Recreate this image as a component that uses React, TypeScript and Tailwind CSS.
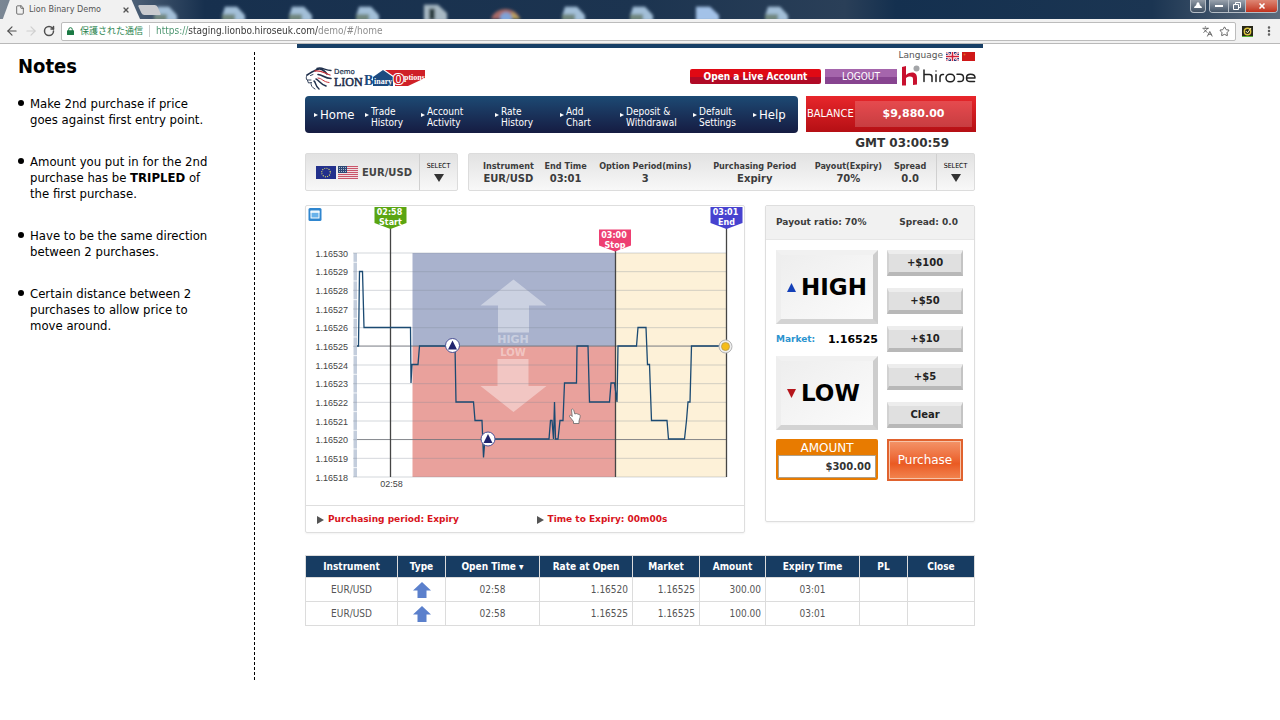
import { useState } from 'react';
import type { ReactNode } from 'react';
import { ArrowLeft, ArrowRight, EllipsisVertical, File, Languages, RotateCw, Star, X } from 'lucide-react';

const condensed = "font-['DejaVu_Sans_Condensed','DejaVu_Sans',sans-serif]";
const wide = "font-['DejaVu_Sans',sans-serif]";

const navItems = [
  ['Home'],
  ['Trade', 'History'],
  ['Account', 'Activity'],
  ['Rate', 'History'],
  ['Add', 'Chart'],
  ['Deposit &', 'Withdrawal'],
  ['Default', 'Settings'],
  ['Help'],
];

const details = [
  ['Instrument', 'EUR/USD'],
  ['End Time', '03:01'],
  ['Option Period(mins)', '3'],
  ['Purchasing Period', 'Expiry'],
  ['Payout(Expiry)', '70%'],
  ['Spread', '0.0'],
];

const positions = [
  { pair: 'EUR/USD', opened: '02:58', rate: '1.16520', market: '1.16525', amount: '300.00', expiry: '03:01' },
  { pair: 'EUR/USD', opened: '02:58', rate: '1.16525', market: '1.16525', amount: '100.00', expiry: '03:01' },
];

const columns = [
  { label: 'Instrument', width: 'w-[92px]' },
  { label: 'Type', width: 'w-[48px]' },
  { label: 'Open Time ▾', width: 'w-[94px]' },
  { label: 'Rate at Open', width: 'w-[93px]' },
  { label: 'Market', width: 'w-[67px]' },
  { label: 'Amount', width: 'w-[66px]' },
  { label: 'Expiry Time', width: 'w-[94px]' },
  { label: 'PL', width: 'w-[48px]' },
  { label: 'Close', width: 'w-[67px]' },
];

// Price ticks as x,y pairs in chart units
const priceLine =
  '357,346 358.5,346 359.5,271.5 362.5,271.5 364,327.5 410.5,327.5 411,383 412,364.5 418,364.5 419.5,346 455,346 456,402 473.5,402 475,420.5 482,420.5 483.5,457.5 485,439 549,439 550.5,420.5 552,420.5 553.5,439 554.5,402 555.5,439 558,439 560,420.5 563,420.5 564.5,383 576.5,383 577,346 588,346 589.5,402 609.5,402 611,383 614.5,383 617,402 618,346 636.5,346 638,327.5 646,327.5 647.5,364.5 649.5,364.5 651.5,420.5 667,420.5 668.5,439 684.5,439 686.5,420.5 688,402 690,402 691.5,346 726,346';

function DesktopBackdrop() {
  const icons = [154, 222, 289, 356, 562, 630, 765];
  return (
    <svg className="absolute inset-0 h-full w-full" viewBox="0 0 1280 20" preserveAspectRatio="none" aria-hidden="true">
      <defs>
        <linearGradient id="desk" x1="0" x2="1">
          <stop offset="0" stopColor="#7b8794" />
          <stop offset="0.1" stopColor="#4f6278" />
          <stop offset="0.16" stopColor="#17304e" />
          <stop offset="0.5" stopColor="#1c3450" />
          <stop offset="0.66" stopColor="#2a3f58" />
          <stop offset="0.7" stopColor="#14304f" />
          <stop offset="0.9" stopColor="#1b3552" />
          <stop offset="1" stopColor="#5c6b7c" />
        </linearGradient>
        <filter id="soft" x="-20%" y="-50%" width="140%" height="200%">
          <feGaussianBlur stdDeviation="1.8" />
        </filter>
      </defs>
      <rect width="1280" height="20" fill="url(#desk)" />
      <g filter="url(#soft)">
        {icons.map((x) => (
          <g key={x}>
            <path d={`M${x + 3} 7h12l8 9v6h-23v-5z`} fill="#a3bfd8" />
            <path d={`M${x} 15h13v7h-13z`} fill="#71877f" />
          </g>
        ))}
        <path d="M424 5h14l9 9v8h-23z" fill="#a8b9c4" />
        <path d="M429 9h6v12h-6z" fill="#263b3d" />
        <path d="M696 7h14l9 9v6h-23z" fill="#a3c2e8" />
        <path d="M491 20a15 14 0 0 1 29 0z" fill="#a76a67" />
        <path d="M512 12l9 8h-10z" fill="#b9a25c" />
        <circle cx="506" cy="19" r="6" fill="#7fa3d8" />
      </g>
    </svg>
  );
}

function BrowserChrome() {
  const [url, setUrl] = useState('https://staging.lionbo.hiroseuk.com/demo/#/home');

  return (
    <header className={`border-b border-[#b9b9b9] bg-[#f1f1f1] ${condensed}`}>
      <div className="relative flex h-[19px] items-end justify-between overflow-hidden">
        <DesktopBackdrop />
        <div className="relative flex items-end">
          <div className="flex h-[19px] w-[140px] items-center gap-1 bg-[#f1f1f1] pl-[15px] pr-[10px] text-[9px] text-[#555] [clip-path:polygon(7%_0,94%_0,100%_100%,2%_100%)]">
            <File className="h-[10px] w-[10px]" strokeWidth={2} />
            <span className="flex-1 whitespace-nowrap">Lion Binary Demo</span>
            <button aria-label="Close tab">
              <X className="h-2 w-2" strokeWidth={4} />
            </button>
          </div>
          <button aria-label="New tab" className="mb-1 h-[10px] w-[19px] skew-x-[25deg] rounded-xs bg-[#c9cbcf]"></button>
        </div>
        <div className="relative mr-[2px] flex h-[13px] gap-[3px] self-start text-white">
          <button aria-label="User" className="flex w-4 items-center justify-center rounded-b-sm border border-t-0 border-[#b5bdc6] bg-linear-to-b from-[#9099a4] to-[#3f4f61]">
            <svg viewBox="0 0 8 8" className="h-2 w-2"><path d="M2.5 2a1.5 1.7 0 0 1 3 0c0 2 2.5 2 2.5 4H0c0-2 2.5-2 2.5-4z" fill="white" /></svg>
          </button>
          <div className="flex overflow-hidden rounded-b-sm border border-t-0 border-[#b5bdc6]">
            <button aria-label="Minimize" className="flex w-[19px] items-center justify-center border-r border-[#b5bdc6] bg-linear-to-b from-[#99a2ad] to-[#445467]">
              <span className="h-[2px] w-2 bg-white"></span>
            </button>
            <button aria-label="Restore" className="flex w-[17px] items-center justify-center border-r border-[#b5bdc6] bg-linear-to-b from-[#99a2ad] to-[#445467]">
              <svg viewBox="0 0 8 8" className="h-2 w-2" fill="none" stroke="white"><path d="M2.5 2V.5h5v5H6M.5 2.5h5v5h-5z" /></svg>
            </button>
            <button aria-label="Close" className="flex w-[31px] items-center justify-center bg-linear-to-b from-[#dd8674] to-[#c12f1b]">
              <X className="h-2 w-2" strokeWidth={5} />
            </button>
          </div>
        </div>
      </div>

      <div className="flex h-6 items-center">
        <div className="flex w-[61px] shrink-0 items-center gap-[5px] pl-[5px] text-[#505050]">
          <button aria-label="Back"><ArrowLeft className="h-[14px] w-[14px]" strokeWidth={2} /></button>
          <button aria-label="Forward" className="text-[#cfcfcf]"><ArrowRight className="h-[14px] w-[14px]" strokeWidth={2} /></button>
          <button aria-label="Reload"><RotateCw className="h-3 w-3" strokeWidth={3} /></button>
        </div>
        <div className="flex h-[19px] flex-1 items-center rounded-xs border border-[#bcbcbc] bg-white px-[5px]">
          <svg viewBox="0 0 7 8" className="h-2 w-[7px]">
            <rect y="3.2" width="7" height="4.8" rx=".6" fill="#1b7a44" />
            <path d="M1.7 4V2.5a1.8 1.8 0 0 1 3.6 0V4" fill="none" stroke="#1b7a44" strokeWidth="1" />
          </svg>
          <span className="ml-[6px] border-r border-[#ccc] pr-[6px] font-['Noto_Sans_CJK_JP',sans-serif] text-[9px] leading-3 text-[#2b8550]">保護された通信</span>
          <input
            aria-label="Address"
            value={url}
            onChange={(e) => setUrl(e.target.value)}
            className="ml-[6px] flex-1 bg-[linear-gradient(to_right,#45916a_0_32px,#333_32px_162px,#888_162px)] bg-clip-text text-[10px] leading-4 text-transparent caret-black outline-none"
          />
          <button aria-label="Translate" className="text-[#555]"><Languages className="h-[11px] w-[11px]" strokeWidth={2} /></button>
          <button aria-label="Bookmark" className="ml-[6px] text-[#555]"><Star className="h-[11px] w-[11px]" strokeWidth={2} /></button>
        </div>
        <button aria-label="Extension" className="ml-[6px]">
          <svg viewBox="0 0 11 11" className="h-[11px] w-[11px]">
            <rect width="11" height="11" fill="#262616" />
            <rect y="10" width="11" height="1" fill="#55b030" />
            <circle cx="5.5" cy="5.5" r="3.2" fill="none" stroke="#d9c33a" strokeWidth="1.4" />
            <path d="M3.8 5l1.7 1.8L9 2" fill="none" stroke="#fff6c0" />
          </svg>
        </button>
        <button aria-label="Menu" className="mr-[5px] ml-[10px] text-[#555]"><EllipsisVertical className="h-3 w-3" strokeWidth={3} /></button>
      </div>
    </header>
  );
}

function Notes() {
  return (
    <aside className={`mt-2 w-[255px] border-r border-dashed border-black pl-[18px] text-black ${condensed}`}>
      <h1 className="text-xl font-bold leading-7">Notes</h1>
      <ul className="mt-4 list-none text-[13px] leading-4 whitespace-nowrap">
        <Note>Make 2nd purchase if price<br />goes against first entry point.</Note>
        <Note>Amount you put in for the 2nd<br />purchase has be <b>TRIPLED</b> of<br />the first purchase.</Note>
        <Note>Have to be the same direction<br />between 2 purchases.</Note>
        <Note>Certain distance between 2<br />purchases to allow price to<br />move around.</Note>
      </ul>
    </aside>
  );
}

function Note({ children }: { children: ReactNode }) {
  return (
    <li className="mb-[26px] flex gap-[6px]">
      <span className="mt-1 h-[6px] w-[6px] shrink-0 rounded-full bg-black"></span>
      <span>{children}</span>
    </li>
  );
}

function LionLogo() {
  return (
    <svg viewBox="0 0 120 26" className="h-[26px] w-[120px] overflow-visible" role="img" aria-label="Demo Lion Binary Options">
      <g fill="none" stroke="#20304c" strokeLinecap="round">
        <path d="M2 9c2-1 4-3 7-4 5-3 8-3 13 3" strokeWidth="1.6" />
        <path d="M10 5c6-1 9 2 15 4" stroke="#c5313a" strokeWidth="1.3" />
        <path d="M12 2.500c5-2 8 2 14 2" strokeWidth="1.4" />
        <path d="M13 8.500c5 0 6 4 13 4" strokeWidth="1.6" />
        <path d="M13 12c4 0 5 4 11 4.500" stroke="#c5313a" strokeWidth="1" />
        <path d="M11 13c3 1 4 5 10 7" strokeWidth="1.5" />
        <path d="M9 15c2 1 1 5 5 8" strokeWidth="1.5" />
        <path d="M2 9c-1 2-1 4 0 5h4M2.500 14.500l1 2.500 3-.5M6 17.500c0 2 1 4 4 5.500M5.500 9.500l2.500-1" strokeWidth=".9" />
      </g>
      <path d="M68 11l10-7 10 7v9H68z" fill="#1d4b80" />
      <path d="M80 4h40v8l-17 8H90V11z" fill="#cf2027" />
      <text x="29" y="8" fontFamily="DejaVu Sans" fontSize="7" fill="#20304c" stroke="#20304c" strokeWidth=".2">Demo</text>
      <text x="29" y="20" fontFamily="Liberation Serif" fontSize="12" fill="#1a2b4a" stroke="#1a2b4a" strokeWidth=".5">LION</text>
      <g fontFamily="Liberation Serif" fontWeight="bold">
        <text x="59" y="19" fontSize="14" fill="#1d4b80">B</text>
        <text x="69" y="18" fontSize="8" fill="white">inary</text>
        <text x="88" y="18" fontSize="14" fill="#cf2027" stroke="white" strokeWidth="2" paintOrder="stroke">O</text>
        <text x="99" y="14" fontSize="8" fill="white">ptions</text>
      </g>
    </svg>
  );
}

function HiroseLogo() {
  return (
    <svg viewBox="0 0 76 22" className="h-[22px] w-[76px]" role="img" aria-label="hirose">
      <path d="M1 2l4-1v19.500H1zM5 10c5-4 11-3 11 3v6.500l-4 .5v-6c0-3-4-3-7-1z" fill="#c8102e" />
      <circle cx="15.5" cy="3.5" r="3" fill="#a3a5a8" />
      <g fill="none" stroke="#222" strokeWidth="1.5" strokeLinecap="round" strokeLinejoin="round">
        <path d="M23 5v11.500M23 9.500h5.500q2.500 0 2.500 2.500v4.500" />
        <path d="M35 9.500v7M35 6v.1" />
        <path d="M39 16.500v-4q0-3 2.500-3h1" />
        <rect x="45" y="9.200" width="8.500" height="7.500" rx="3.700" />
        <path d="M56 9.300h3q3.500 0 3.500 3.600t-3.500 3.600H57" />
        <path d="M73.500 16.500H69q-3.500 0-3.500-3.600t4-3.600q4.500 0 4.500 3.600h-8" />
      </g>
    </svg>
  );
}

function UkFlag() {
  return (
    <svg viewBox="0 0 13 9" className="h-[9px] w-[13px]">
      <rect width="13" height="9" fill="#2b3a7c" />
      <path d="M0 0l13 9M13 0L0 9" stroke="white" strokeWidth="2" />
      <path d="M0 0l13 9M13 0L0 9" stroke="#c8304a" strokeWidth=".7" />
      <path d="M6.5 0v9M0 4.500h13" stroke="white" strokeWidth="3" />
      <path d="M6.5 0v9M0 4.500h13" stroke="#cf2038" strokeWidth="1.5" />
    </svg>
  );
}

function ChinaFlag() {
  return (
    <svg viewBox="0 0 13 9" className="h-[9px] w-[13px]">
      <rect width="13" height="9" fill="#cf1818" />
      <circle cx="2.5" cy="2.5" r="1" fill="#e06a20" />
    </svg>
  );
}

function EuFlag() {
  return (
    <svg viewBox="0 0 20 13" className="h-[13px] w-5">
      <rect width="20" height="13" fill="#22308c" />
      <circle cx="10" cy="6.5" r="4.3" fill="none" stroke="#d9d66a" strokeWidth="1.2" strokeDasharray="1 1.25" />
    </svg>
  );
}

function UsFlag() {
  return (
    <svg viewBox="0 0 20 13" className="h-[13px] w-5">
      <rect width="20" height="13" fill="#f1dfe2" />
      {[0, 2, 4, 6, 8, 10, 12].map((y) => <rect key={y} y={y} width="20" height="1" fill="#c9566a" />)}
      <rect width="9" height="7" fill="#2d4876" />
      <path d="M1 1.500h8M1 3.500h8M1 5.500h8" stroke="#c9d4e4" strokeWidth=".8" strokeDasharray="1 1" />
    </svg>
  );
}

function SelectButton({ label }: { label: string }) {
  return (
    <button aria-label={label} className="flex w-[38px] shrink-0 flex-col items-center justify-center gap-1 border-l border-[#d0d0d0]">
      <span className={`text-[7px] leading-2 text-black ${condensed}`}>SELECT</span>
      <svg viewBox="0 0 10 8" className="h-2 w-[10px]"><path d="M0 0h10L5 8z" fill="#333" /></svg>
    </button>
  );
}

function Masthead() {
  return (
    <div className="flex h-12 items-start justify-between">
      <div className="pt-[18px]"><LionLogo /></div>
      <div className="flex flex-col items-end">
        <div className={`flex h-4 items-center gap-[3px] pr-[2px] text-[9px] text-[#555] ${wide}`}>
          Language
          <button aria-label="English"><UkFlag /></button>
          <button aria-label="Chinese"><ChinaFlag /></button>
        </div>
        <div className="mt-[1px] flex items-center gap-1">
          <button className={`h-[15px] w-[131px] rounded-xs bg-linear-to-b from-[#e00914] from-50% to-[#b00a26] to-50% text-[10px] leading-[15px] font-bold text-white ${condensed}`}>
            Open a Live Account
          </button>
          <button className={`h-[15px] w-[72px] bg-linear-to-b from-[#a565ac] from-50% to-[#874490] to-50% text-[10px] leading-[15px] text-white ${condensed}`}>
            LOGOUT
          </button>
          <HiroseLogo />
        </div>
      </div>
    </div>
  );
}

function Navigation() {
  return (
    <div className="flex gap-2 pr-[1px]">
      <nav className={`grid h-[37px] flex-1 grid-cols-[51fr_56fr_74fr_65fr_60fr_73fr_60fr_45fr] rounded-sm bg-linear-to-b from-[#1c4a74] to-[#151c42] pl-[9px] text-white ${condensed}`}>
        {navItems.map((lines) => (
          <a key={lines.join(' ')} href="#" className="flex items-center gap-[2px] whitespace-nowrap">
            <svg viewBox="0 0 4 4" className="h-1 w-1 shrink-0"><path d="M0 0l4 2-4 2z" fill="white" /></svg>
            {lines.length === 1 ? (
              <span className="text-[13px]">{lines[0]}</span>
            ) : (
              <span className="pt-1 text-[10px] leading-[11px]">{lines[0]}<br />{lines[1]}</span>
            )}
          </a>
        ))}
      </nav>
      <div className="flex h-9 w-[170px] items-center bg-linear-to-b from-[#e8262b] to-[#b50f14] pr-1 text-white">
        <span className={`w-12 pl-[1px] text-[11px] ${condensed}`}>BALANCE</span>
        <span className={`ml-[1px] flex h-[26px] flex-1 items-center justify-center bg-white/18 text-[11px] font-bold ${wide}`}>$9,880.00</span>
      </div>
    </div>
  );
}

function InstrumentBar() {
  return (
    <div className="flex h-[38px] gap-[10px] pr-[2px]">
      <div className="flex w-[153px] shrink-0 rounded-xs border border-[#dcdcdc] bg-linear-to-b from-[#e2e2e2] to-[#f8f8f8]">
        <div className={`flex flex-1 items-center gap-[2px] pl-[10px] text-[10px] font-bold text-[#444] ${wide}`}>
          <EuFlag />
          <UsFlag />
          <span className="pl-[2px]">EUR/USD</span>
        </div>
        <SelectButton label="Select instrument" />
      </div>
      <div className="flex min-w-0 flex-1 rounded-xs border border-[#dcdcdc] bg-linear-to-b from-[#e2e2e2] to-[#f8f8f8]">
        <dl className="grid flex-1 grid-cols-[59fr_56fr_104fr_116fr_72fr_52fr] items-center pl-[10px] text-center text-[#3c3c3c]">
          {details.map(([term, value]) => (
            <div key={term} className="whitespace-nowrap">
              <dt className={`text-[9px] leading-3 font-bold ${condensed}`}>{term}</dt>
              <dd className={`text-[10px] leading-[13px] font-bold ${wide}`}>{value}</dd>
            </div>
          ))}
        </dl>
        <SelectButton label="Select option" />
      </div>
    </div>
  );
}

function TimeFlag({ x, y, color, time, label }: { x: number; y: number; color: string; time: string; label: string }) {
  return (
    <g>
      <path d={`M${x - 16} ${y}h32v16l-16 6-16-6z`} fill={color} />
      <g fontFamily="DejaVu Sans, sans-serif" fontSize="8" fontWeight="bold" fill="white" textAnchor="middle">
        <text x={x - 1} y={y + 8}>{time}</text>
        <text x={x} y={y + 18}>{label}</text>
      </g>
    </g>
  );
}

function EntryMark({ x, y }: { x: number; y: number }) {
  return (
    <g>
      <circle cx={x} cy={y} r="7" fill="white" stroke="#4a4f94" />
      <path d={`M${x} ${y - 5}l4.5 9h-9z`} fill="#20246e" />
    </g>
  );
}

function PriceChart() {
  const levels = Array.from({ length: 13 }, (_, i) => ({ y: 253 + (i * 56) / 3, label: `1.165${30 - i}` }));
  return (
    <svg viewBox="306 206 438 299" className="block w-full" role="img" aria-label="EUR/USD price chart">
      <rect x="308.5" y="208" width="13" height="13" rx="1.5" fill="#2f86cf" />
      <rect x="311" y="211" width="8" height="7" fill="#69b2ea" stroke="white" />
      <path d="M310.5 212h9" stroke="white" strokeWidth="1.5" />

      <rect x="412.5" y="253" width="203" height="93" fill="#a9b2cd" />
      <rect x="412.5" y="346" width="203" height="131" fill="#e9a19c" />
      <rect x="616" y="253" width="110" height="224" fill="#fdf1d8" />

      <g fill="white" fillOpacity=".4">
        <path d="M513.500 279.500l33 26h-17.500v27h-31v-27h-17.500z" />
        <path d="M497.500 359h31v27h18l-33 26-33-26h17z" />
        <g fontFamily="DejaVu Sans" fontWeight="bold" textAnchor="middle">
          <text x="513" y="343" fontSize="11">HIGH</text>
          <text x="513" y="356" fontSize="10">LOW</text>
        </g>
      </g>

      <rect x="353.5" y="253" width="3.5" height="224" fill="#c3cddc" />
      {levels.map((level, i) => (
        <g key={level.label}>
          <path d={`M353 ${level.y}h373.5`} stroke="#7d8796" strokeOpacity=".33" />
          <path d={`M353 ${level.y + 9.3}h4`} stroke="white" strokeOpacity={i < 12 ? 0.8 : 0} />
          <text x="348" y={level.y + 3.5} textAnchor="end" fontFamily="Liberation Sans" fontSize="9" fill="#444">{level.label}</text>
        </g>
      ))}
      <path d="M357 346h369M357 439.500h369" stroke="#6f7177" strokeOpacity=".75" />

      <path d="M390.500 228v249M615.500 250v227M726.500 228v249" stroke="#454545" strokeWidth="1.3" />
      <text x="391.5" y="486.5" textAnchor="middle" fontFamily="Liberation Sans" fontSize="9" fill="#444">02:58</text>

      <polyline points={priceLine} fill="none" stroke="#1b4a72" strokeWidth="1.3" />

      <TimeFlag x={390.5} y={207} color="#5aa511" time="02:58" label="Start" />
      <TimeFlag x={615} y={229.5} color="#ee3f72" time="03:00" label="Stop" />
      <TimeFlag x={726.5} y={207} color="#4742cf" time="03:01" label="End" />

      <EntryMark x={452.5} y={345.5} />
      <EntryMark x={488} y={439} />
      <circle cx="725.5" cy="346.5" r="6.5" fill="#eeeeee" stroke="#b5b5b5" />
      <circle cx="725.5" cy="346.5" r="4" fill="#f5bd1a" stroke="#b89a50" strokeWidth=".8" />

      <path
        d="M571.500 409.500c1-1 2 0 2.300 1l1 3.500 1.500-.5 1.500.6 1.500.4c1 .3 1 1.500.7 3l-1 3.500v2.500h-5.500v-2l-4-5c-.5-1.300 1-1.700 2-.8l.7.8z"
        fill="white"
        stroke="#666"
        strokeWidth=".8"
      />
    </svg>
  );
}

function ChartPanel() {
  return (
    <section className="flex-1 self-start rounded-xs border border-[#dedede] shadow-xs">
      <PriceChart />
      <div className={`grid h-[27px] grid-cols-[219fr_207fr] items-center border-t border-[#dedede] pt-[2px] pl-[11px] text-[9px] font-bold text-[#d8141c] ${wide}`}>
        <PanelNote>Purchasing period: Expiry</PanelNote>
        <PanelNote>Time to Expiry: 00m00s</PanelNote>
      </div>
    </section>
  );
}

function PanelNote({ children }: { children: ReactNode }) {
  return (
    <p className="flex items-center gap-1 whitespace-nowrap">
      <svg viewBox="0 0 7 8" className="h-2 w-[7px]"><path d="M0 0l7 4-7 4z" fill="#555" /></svg>
      {children}
    </p>
  );
}

function OrderPanel() {
  const [amount, setAmount] = useState(300);
  const big = `flex h-[74px] w-full items-center gap-[5px] border-5 border-t-[#f1f1f1] border-r-[#cdcdcd] border-b-[#d3d3d3] border-l-[#eeeeee] bg-linear-to-br from-[#eeeeee] to-[#fbfbfb] pl-[6px] text-[23px] font-bold text-black ${wide}`;
  const small = 'h-[26px] w-full border-x-2 border-y-4 border-t-[#ededed] border-r-[#c4c4c4] border-b-[#b8b8b8] border-l-[#d2d2d2] bg-[#e0e0e0] text-[10px] leading-[18px] font-bold text-[#222]';

  return (
    <section className={`h-[317px] w-[210px] shrink-0 rounded-xs border border-[#dedede] shadow-xs ${wide}`}>
      <div className="flex h-[34px] items-center justify-between border-b border-[#e6e6e6] bg-[#f1f1f1] pr-4 pl-[10px] text-[9px] font-bold text-[#3c3c3c]">
        <span>Payout ratio: 70%</span>
        <span>Spread: 0.0</span>
      </div>
      <div className="grid grid-cols-[102fr_76fr] gap-x-[9px] pt-[10px] pr-[11px] pl-[10px]">
        <div className="flex flex-col">
          <button className={big}>
            <svg viewBox="0 0 9 9" className="h-[9px] w-[9px] shrink-0"><path d="M4.500 0L9 9H0z" fill="#1440b8" /></svg>
            HIGH
          </button>
          <p className="flex h-8 items-center justify-between text-[9px] font-bold text-[#2b94cf]">
            Market: <span className="text-[11px] text-black">1.16525</span>
          </p>
          <button className={big}>
            <svg viewBox="0 0 9 9" className="h-[9px] w-[9px] shrink-0"><path d="M4.500 9L9 0H0z" fill="#b5161c" /></svg>
            LOW
          </button>
        </div>
        <div className="flex flex-col gap-3">
          <button className={small} onClick={() => setAmount(amount + 100)}>+$100</button>
          <button className={small} onClick={() => setAmount(amount + 50)}>+$50</button>
          <button className={small} onClick={() => setAmount(amount + 10)}>+$10</button>
          <button className={small} onClick={() => setAmount(amount + 5)}>+$5</button>
          <button className={small} onClick={() => setAmount(0)}>Clear</button>
        </div>
        <div className="mt-[9px] h-[41px] rounded-xs border-2 border-[#e87b00] bg-[#e87b00]">
          <label htmlFor="amount" className="block text-center text-xs leading-[14px] text-white">AMOUNT</label>
          <input
            id="amount"
            readOnly
            value={`$${amount.toFixed(2)}`}
            className="block h-[23px] w-full border border-[#b0a089] bg-white pr-1 text-right text-[10px] font-bold text-[#333] outline-none"
          />
        </div>
        <button className="mt-[9px] h-[42px] border-2 border-[#e0622e] bg-linear-to-b from-[#f39468] via-[#ea5a22] via-60% to-[#f2854f] text-xs text-white inset-ring inset-ring-[#f7c3a8]">
          Purchase
        </button>
      </div>
    </section>
  );
}

function UpArrow() {
  return (
    <svg viewBox="0 0 18 16" className="mx-auto h-4 w-[18px]">
      <path d="M9 0l9 8.500h-4.500V16h-9V8.500H0z" fill="#5b80cc" />
    </svg>
  );
}

function Positions() {
  const cell = 'border border-[#dcdcdc] py-0';
  return (
    <table className={`w-full table-fixed border-collapse text-[10px] text-[#555] ${condensed}`}>
      <thead>
        <tr className="h-[22px] bg-[#173c62] text-white">
          {columns.map((column) => (
            <th key={column.label} className={`border border-[#dcdcdc] p-0 font-bold whitespace-nowrap ${column.width}`}>{column.label}</th>
          ))}
        </tr>
      </thead>
      <tbody>
        {positions.map((row) => (
          <tr key={row.rate} className="h-6">
            <td className={`${cell} text-center`}>{row.pair}</td>
            <td className={cell}><UpArrow /></td>
            <td className={`${cell} text-center`}>{row.opened}</td>
            <td className={`${cell} pr-1 text-right`}>{row.rate}</td>
            <td className={`${cell} pr-1 text-right`}>{row.market}</td>
            <td className={`${cell} pr-1 text-right`}>{row.amount}</td>
            <td className={`${cell} text-center`}>{row.expiry}</td>
            <td className={cell}></td>
            <td className={cell}></td>
          </tr>
        ))}
      </tbody>
    </table>
  );
}

export default function App() {
  return (
    <div className="min-h-screen bg-white">
      <BrowserChrome />
      <div className="grid grid-cols-[minmax(255px,1fr)_minmax(0,686px)_1fr]">
        <Notes />
        <main className="border-t-4 border-[#173f66] pr-[6px] pb-[54px] pl-2">
          <Masthead />
          <Navigation />
          <p className={`pr-7 text-right text-xs leading-5 font-bold text-[#333] ${wide}`}>GMT 03:00:59</p>
          <InstrumentBar />
          <div className="mt-[14px] mb-[22px] flex gap-5 pr-[2px]">
            <ChartPanel />
            <OrderPanel />
          </div>
          <div className="pr-[2px]">
            <Positions />
          </div>
        </main>
      </div>
    </div>
  );
}
